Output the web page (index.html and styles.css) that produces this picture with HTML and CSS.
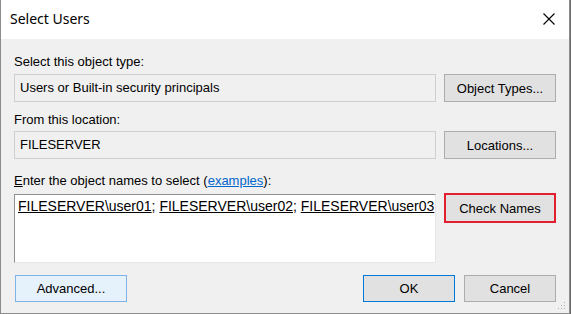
FILE: index.html
```html
<!DOCTYPE html>
<html>
<head>
<meta charset="utf-8">
<link rel="stylesheet" href="styles.css">
</head>
<body>
<div class="window">
  <div class="titlebar">
    <span class="title">Select Users</span>
    <svg class="close" width="12" height="12" viewBox="0 0 12 12"><path d="M0.5 0.5 L11.5 11.5 M11.5 0.5 L0.5 11.5" stroke="#000" stroke-width="1.1" fill="none"/></svg>
  </div>
  <div class="content">
    <div class="label first">Select this object type:</div>
    <div class="row">
      <div class="field">Users or Built-in security principals</div>
      <div class="btn">Object Types...</div>
    </div>
    <div class="label second">From this location:</div>
    <div class="row">
      <div class="field">FILESERVER</div>
      <div class="btn">Locations...</div>
    </div>
    <div class="label third"><u>E</u>nter the object names to select (<a class="link">examples</a>):</div>
    <div class="row top">
      <div class="memo"><u>FILESERVER\user01</u>; <u>FILESERVER\user02</u>; <u>FILESERVER\user03</u></div>
      <div class="btn highlight">Check Names</div>
    </div>
    <div class="footer">
      <div class="btn wide advanced">Advanced...</div>
      <div class="spacer"></div>
      <div class="btn small default">OK</div>
      <div class="btn small">Cancel</div>
    </div>
  </div>
  <svg class="grip" width="8" height="8" viewBox="0 0 8 8"><rect x="6" y="0" width="1" height="1" fill="#b0b0b0"/><rect x="3" y="3" width="1" height="1" fill="#b0b0b0"/><rect x="6" y="3" width="1" height="1" fill="#b0b0b0"/><rect x="0" y="6" width="1" height="1" fill="#b0b0b0"/><rect x="3" y="6" width="1" height="1" fill="#b0b0b0"/><rect x="6" y="6" width="1" height="1" fill="#b0b0b0"/></svg>
</div>
</body>
</html>
```
FILE: styles.css
```css
* { box-sizing: border-box; }
html, body { margin: 0; padding: 0; }
body {
  width: 571px;
  height: 314px;
  background: #6b6b6b;
  font-family: "Liberation Sans", Arial, sans-serif;
  font-size: 13px;
  color: #000;
  overflow: hidden;
}
.window {
  position: relative;
  width: 570px;
  height: 314px;
  background: #f0f0f0;
  border: 1px solid #8c8c8c;
  border-top: none;
}
.titlebar {
  height: 39px;
  background: #fff;
  display: flex;
  align-items: center;
  justify-content: space-between;
  padding: 0 14px 0 9px;
}
.title {
  font-family: "Noto Sans", "Open Sans", sans-serif;
  font-size: 14px;
  color: #000;
  position: relative;
  top: -1px;
}
.close { display: block; margin-top: -1px; }
.content {
  padding: 15px 13px 0 13px;
}
.label {
  height: 15px;
  line-height: 15px;
  white-space: nowrap;
}
.label.first { margin-bottom: 5px; }
.label.second { margin-top: 10px; margin-bottom: 4px; }
.label.third { margin-top: 14px; margin-bottom: 6px; }
.link { color: #0066cc; text-decoration: underline; }
.row {
  display: grid;
  grid-template-columns: 1fr 112px;
  column-gap: 8px;
  align-items: stretch;
}
.row.top { align-items: start; }
.field {
  height: 28px;
  border: 1px solid #cfcfcf;
  background: #f0f0f0;
  padding: 0 5px;
  line-height: 25px;
  white-space: nowrap;
}
.memo {
  height: 69px;
  background: #fff;
  border: 1px solid;
  border-color: #8f8f8f #e6e6e6 #e6e6e6 #8f8f8f;
  padding: 3px 3px;
  font-size: 14px;
  line-height: 16px;
  white-space: nowrap;
  overflow: hidden;
}
.btn {
  height: 28px;
  background: #e1e1e1;
  border: 1px solid #adadad;
  display: flex;
  align-items: center;
  justify-content: center;
  white-space: nowrap;
}
.btn.highlight {
  border: 2px solid #e0202c;
  height: 30px;
  margin-top: -1px;
}
.footer {
  display: flex;
  margin-top: 12px;
  padding-left: 1px;
}
.spacer { flex: 1; }
.btn.wide { width: 112px; height: 27px; }
.btn.small { width: 92px; height: 27px; margin-left: 9px; }
.btn.advanced { background: #e5f1fb; border-color: #7fb2e5; }
.btn.default { border-color: #0078d7; }
.grip {
  position: absolute;
  right: 3px;
  bottom: 3px;
}
```
